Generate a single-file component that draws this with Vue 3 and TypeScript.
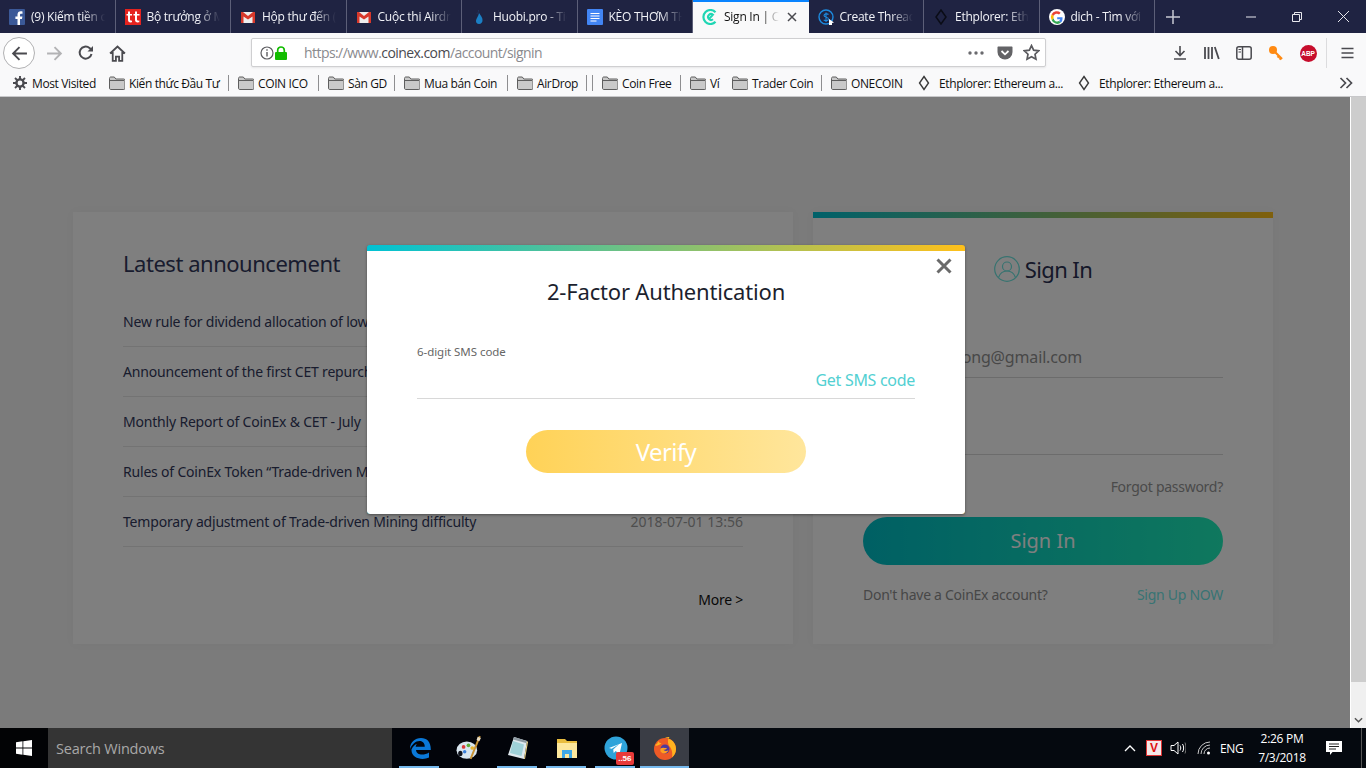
<script setup lang="ts">
interface Tab { title: string; icon: string; active?: boolean }
const tabs: Tab[] = [
  { title: '(9) Kiếm tiền cùng', icon: 'fb' },
  { title: 'Bộ trưởng ở Mỹ', icon: 'tt' },
  { title: 'Hộp thư đến (1)', icon: 'gm' },
  { title: 'Cuộc thi Airdrop', icon: 'gm' },
  { title: 'Huobi.pro - Tiền', icon: 'hb' },
  { title: 'KÈO THƠM THÁNG', icon: 'doc' },
  { title: 'Sign In | CoinEx', icon: 'cx', active: true },
  { title: 'Create Thread', icon: 'ct' },
  { title: 'Ethplorer: Ethereum', icon: 'eth' },
  { title: 'dich - Tìm với Google', icon: 'g' }
]
interface Mark { label: string; kind: string; w: number; sep?: number }
const marks: Mark[] = [
  { label: 'Most Visited', kind: 'gear', w: 96, sep: 0 },
  { label: 'Kiến thức Đầu Tư', kind: 'folder', w: 119, sep: 1 },
  { label: 'COIN ICO', kind: 'folder', w: 80, sep: 1 },
  { label: 'Sàn GD', kind: 'folder', w: 66, sep: 1 },
  { label: 'Mua bán Coin', kind: 'folder', w: 103, sep: 1 },
  { label: 'AirDrop', kind: 'folder', w: 69, sep: 2 },
  { label: 'Coin Free', kind: 'folder', w: 78, sep: 1 },
  { label: 'Ví', kind: 'folder', w: 42, sep: 0 },
  { label: 'Trader Coin', kind: 'folder', w: 89, sep: 1 },
  { label: 'ONECOIN', kind: 'folder', w: 87, sep: 0 },
  { label: 'Ethplorer: Ethereum a...', kind: 'eth', w: 160, sep: 0 },
  { label: 'Ethplorer: Ethereum a...', kind: 'eth', w: 160, sep: 0 }
]
const news = [
  { title: 'New rule for dividend allocation of low', date: '' },
  { title: 'Announcement of the first CET repurchase', date: '' },
  { title: 'Monthly Report of CoinEx & CET - July', date: '' },
  { title: 'Rules of CoinEx Token “Trade-driven Mining”', date: '' },
  { title: 'Temporary adjustment of Trade-driven Mining difficulty', date: '2018-07-01 13:56' }
]
const taskApps = ['edge', 'paint', 'note', 'files', 'tg', 'ff']
const runningApps = ['edge', 'note', 'files', 'tg', 'ff']
</script>

<template>
  <div class="screen">
    <div class="tabstrip">
      <div v-for="t in tabs" :key="t.title" class="tab" :class="{ active: t.active }">
        <svg class="fav" viewBox="0 0 16 16">
          <template v-if="t.icon === 'fb'">
            <rect width="16" height="16" rx="1" fill="#3b5998" />
            <path d="M11 16v-6h2l.4-2.6H11V6c0-.8.3-1.3 1.4-1.3h1.1V2.4C13.200 2.300 12.500 2.300 11.800 2.300 9.800 2.300 8.500 3.500 8.500 5.600v1.800H6.400V10h2.100v6z" fill="#fff" />
          </template>
          <template v-else-if="t.icon === 'tt'">
            <rect width="16" height="16" fill="#e5231f" />
            <path d="M3 2.500h2v2.500h2v1.600H5v4c0 .9.600 1.200 2 1v1.700c-2.500.5-4-.2-4-2.500V6.600H1.500V5H3zM10 2.500h2v2.500h2.500v1.600H12v4c0 .9.600 1.200 2.300 1v1.700c-2.800.5-4.300-.2-4.300-2.500V6.600H8.500V5H10z" fill="#fff" />
          </template>
          <template v-else-if="t.icon === 'gm'">
            <rect x="1" y="3" width="14" height="11" fill="#eeeeee" />
            <path d="M1 3h2l5 4 5-4h2v11h-2.500V7.500L8 10.500 3.500 7.500V14H1z" fill="#d8382b" />
          </template>
          <template v-else-if="t.icon === 'hb'">
            <path d="M8 4c2 3 3.500 4.500 3.500 7A3.500 3.500 0 0 1 8 15c-2 0-3.200-1.500-3-3.500C5.200 9.500 7.500 7 8 4z" fill="#1b7fc4" />
            <path d="M7.500 1C8 3 6.500 4 5.800 5" stroke="#22345e" fill="none" />
          </template>
          <template v-else-if="t.icon === 'doc'">
            <rect width="16" height="16" rx="1" fill="#4285f4" />
            <path d="M3.500 4.500h9M3.500 7h9M3.500 9.500h9M3.500 12h6" stroke="#fff" stroke-width="1.100" />
          </template>
          <template v-else-if="t.icon === 'cx'">
            <path d="M13.500 12.800A7 7 0 1 1 13.500 3.200" fill="none" stroke="#1fd6b4" stroke-width="2.200" />
            <path d="M11 10.300A3 3 0 1 1 11 5.700L7 10" fill="none" stroke="#1fd6b4" stroke-width="2" />
          </template>
          <template v-else-if="t.icon === 'ct'">
            <circle cx="8" cy="8" r="7" fill="none" stroke="#1d8be0" stroke-width="1.400" />
            <path d="M10.500 5.500C9.500 4.500 6 4.500 6 6.500S10.500 8 10.500 10 7 12 5.700 10.800M8 3.500v9.500" fill="none" stroke="#1d8be0" stroke-width="1.100" />
            <path d="M11 10l5 3.500-2 .5v2h-3z" fill="#fff" />
          </template>
          <template v-else-if="t.icon === 'eth'">
            <path d="M8 1l5 7-5 7-5-7z" fill="none" stroke="#0a0c16" stroke-width="1.500" />
          </template>
          <template v-else>
            <circle cx="8" cy="8" r="8" fill="#fff" />
            <path d="M13.500 8.200H8.200v2h3a3.300 3.300 0 0 1-1.300 1.900l2 1.500c1.200-1.100 1.800-2.900 1.600-5.400z" fill="#4285f4" />
            <path d="M4.700 9.300a3.500 3.500 0 0 0 5.200 2.800l2 1.500A6 6 0 0 1 2.600 10.900z" fill="#34a853" />
            <path d="M4.700 6.800a3.600 3.600 0 0 0 0 2.500l-2.100 1.600a6 6 0 0 1 0-5.700z" fill="#fbbc05" />
            <path d="M2.600 5.200a6 6 0 0 1 9.100-1.500L10 5.400a3.500 3.500 0 0 0-5.300 1.400z" fill="#ea4335" />
          </template>
        </svg>
        <span class="tab-title">{{ t.title }}</span>
        <svg v-if="t.active" class="tab-close" viewBox="0 0 10 10"><path d="M1 1l8 8M9 1l-8 8" stroke="#4a4a4f" stroke-width="1.500" /></svg>
      </div>
      <div class="newtab">
        <svg viewBox="0 0 14 14" width="14" height="14"><path d="M7 0v14M0 7h14" stroke="#c8c9d2" stroke-width="1.500" /></svg>
      </div>
      <div class="winctl">
        <span class="wc"><svg viewBox="0 0 10 10" width="10" height="10"><path d="M0 5h10" stroke="#e8e8ee" /></svg></span>
        <span class="wc"><svg viewBox="0 0 10 10" width="10" height="10"><path d="M.5 2.500h7v7h-7zM2.500 2.500v-2h7v7h-2" fill="none" stroke="#e8e8ee" /></svg></span>
        <span class="wc"><svg viewBox="0 0 10 10" width="11" height="11"><path d="M0 0l10 10M10 0L0 10" stroke="#e8e8ee" stroke-width=".9" /></svg></span>
      </div>
    </div>

    <div class="navbar">
      <div class="nav-left">
        <span class="back">
          <svg viewBox="0 0 16 16" width="17" height="17"><path d="M15 8H2M8 2L2 8l6 6" fill="none" stroke="#4a4a4f" stroke-width="1.800" /></svg>
        </span>
        <svg class="nav-ico fwd" viewBox="0 0 16 16" width="17" height="17"><path d="M1 8h13M8 2l6 6-6 6" fill="none" stroke="#b3b3b5" stroke-width="1.800" /></svg>
        <svg class="nav-ico" viewBox="0 0 16 16" width="16" height="16"><path d="M13.500 9A6 6 0 1 1 11.500 3L14 5" fill="none" stroke="#4a4a4f" stroke-width="2" /><path d="M15 1v5.500H9.500z" fill="#4a4a4f" /></svg>
        <svg class="nav-ico home" viewBox="0 0 16 16" width="17" height="17"><path d="M1 8l7-6.500L15 8M3.500 6.500V15h3v-4h3v4h3V6.500" fill="none" stroke="#4a4a4f" stroke-width="1.700" /></svg>
      </div>
      <div class="urlbar">
        <svg viewBox="0 0 14 14" width="14" height="14"><circle cx="7" cy="7" r="6" fill="none" stroke="#5c5c60" stroke-width="1.200" /><path d="M7 6v4.500M7 3.300v1.500" stroke="#5c5c60" stroke-width="1.400" /></svg>
        <svg class="lock" viewBox="0 0 14 14" width="14" height="14"><rect x="1" y="6" width="12" height="8" rx="1" fill="#12bc00" /><path d="M3.700 6.500V4.300a3.300 3.300 0 0 1 6.600 0v2.200" fill="none" stroke="#12bc00" stroke-width="1.700" /></svg>
        <span class="url">https://www.<b>coinex.com</b>/account/signin</span>
        <span class="url-end">
          <svg class="dots" viewBox="0 0 16 4" width="16" height="4"><circle cx="2" cy="2" r="1.700" fill="#6a6a6e" /><circle cx="8" cy="2" r="1.700" fill="#6a6a6e" /><circle cx="14" cy="2" r="1.700" fill="#6a6a6e" /></svg>
          <svg viewBox="0 0 16 16" width="16" height="16"><path d="M1.500 1.500h13c.6 0 1 .4 1 1V7a7.500 7.500 0 0 1-15 0V2.500c0-.6.4-1 1-1z" fill="#636366" /><path d="M4.500 6L8 9.300 11.500 6" fill="none" stroke="#fff" stroke-width="1.800" /></svg>
          <svg viewBox="0 0 16 16" width="17" height="17"><path d="M8 1.500l2 4.300 4.700.6-3.400 3.200.9 4.700L8 12l-4.200 2.300.9-4.700L1.300 6.400 6 5.800z" fill="none" stroke="#5a5a5e" stroke-width="1.600" /></svg>
        </span>
      </div>
      <div class="nav-right">
        <span class="nr"><svg viewBox="0 0 14 14" width="14" height="14"><path d="M7 0v9M2.500 5L7 9.500 11.500 5M1 13h12" fill="none" stroke="#4a4a4f" stroke-width="1.600" /></svg></span>
        <span class="nr"><svg viewBox="0 0 16 14" width="16" height="14"><path d="M1 1v12M4.500 1v12M8 1v12M10.800 1l4 12" fill="none" stroke="#4a4a4f" stroke-width="1.800" /></svg></span>
        <span class="nr"><svg viewBox="0 0 16 14" width="16" height="14"><rect x=".8" y=".8" width="14.400" height="12.400" rx="2" fill="none" stroke="#4a4a4f" stroke-width="1.500" /><path d="M6.500 1v12" stroke="#4a4a4f" stroke-width="1.500" /><path d="M2.500 3.500h2.500M2.500 6h2.500" stroke="#4a4a4f" /></svg></span>
        <span class="nr"><svg viewBox="0 0 16 16" width="16" height="16"><circle cx="5" cy="5" r="4" fill="#ff8a12" /><path d="M7.500 7.500L14 14M11 11l-1.500 1.500M13 13l-1.500 1.500" stroke="#ff8a12" stroke-width="2.200" fill="none" /></svg></span>
        <span class="nr"><span class="abp">ABP</span></span>
        <span class="nr-sep"></span>
        <span class="nr"><svg viewBox="0 0 12 12" width="13" height="12"><path d="M0 1.500h12M0 6h12M0 10.500h12" stroke="#4a4a4f" stroke-width="1.500" /></svg></span>
      </div>
    </div>

    <div class="bookmarks">
      <div class="marks">
        <template v-for="(m, i) in marks" :key="i">
          <div class="mark" :style="{ width: m.w + 'px' }">
            <svg v-if="m.kind === 'gear'" class="mk-gear" viewBox="0 0 14 14" width="14" height="14"><circle cx="7" cy="7" r="3.600" fill="none" stroke="#4a4a4f" stroke-width="2.400" /><path d="M7 0v3M7 11v3M0 7h3M11 7h3M2 2l2.200 2.200M9.800 9.800L12 12M12 2L9.800 4.200M4.200 9.800L2 12" stroke="#4a4a4f" stroke-width="1.900" /></svg>
            <svg v-else-if="m.kind === 'folder'" class="mk-folder" viewBox="0 0 16 14" width="16" height="14"><path d="M.5 2.500c0-.8.5-1.500 1.200-1.500h3.600l1.500 2h8c.6 0 1.200.5 1.200 1.200v8.100c0 .6-.5 1.200-1.200 1.200H1.700c-.7 0-1.200-.6-1.200-1.200z" fill="#c9c9c9" stroke="#5e5e5e" /><path d="M1 4.500h14" stroke="#5e5e5e" /></svg>
            <svg v-else class="mk-eth" viewBox="0 0 12 16" width="12" height="16"><path d="M6 1.500l4.500 6.500L6 14.500 1.500 8z" fill="none" stroke="#3a3a3a" stroke-width="1.400" /></svg>
            <span class="mk-label">{{ m.label }}</span>
          </div>
          <i v-for="n in m.sep" :key="n" class="mk-sep"></i>
        </template>
      </div>
      <svg class="more-marks" viewBox="0 0 14 12" width="14" height="12"><path d="M1.500 1l5 5-5 5M7.500 1l5 5-5 5" fill="none" stroke="#4a4a4f" stroke-width="1.700" /></svg>
    </div>

    <div class="viewport">
      <div class="page">
        <div class="cards">
          <section class="card news">
            <h2>Latest announcement</h2>
            <ul>
              <li v-for="n in news" :key="n.title"><span>{{ n.title }}</span><time>{{ n.date }}</time></li>
            </ul>
            <a class="more">More &gt;</a>
          </section>
          <section class="card login">
            <div class="rainbow"></div>
            <div class="login-head">
              <svg viewBox="0 0 26 26" width="26" height="26"><circle cx="13" cy="13" r="12.300" fill="none" stroke="#6fe6e0" stroke-width="1.200" /><circle cx="13" cy="10.500" r="4.500" fill="none" stroke="#6fe6e0" stroke-width="1.200" /><path d="M4.500 21.500c1.500-4.500 5-6.500 8.500-6.500s7 2 8.500 6.500" fill="none" stroke="#6fe6e0" stroke-width="1.200" /></svg>
              <span>Sign In</span>
            </div>
            <div class="field email">nguyenhuythong@gmail.com</div>
            <div class="field pass"></div>
            <div class="forgot">Forgot password?</div>
            <div class="signin-btn">Sign In</div>
            <div class="signup"><span>Don't have a CoinEx account?</span><a>Sign Up NOW</a></div>
          </section>
        </div>
        <div class="overlay">
          <div class="modal">
            <svg class="modal-x" viewBox="0 0 16 16" width="16" height="16"><path d="M1.500 1.500l13 13M14.500 1.500l-13 13" stroke="#6a6a6a" stroke-width="3" /></svg>
            <h3>2-Factor Authentication</h3>
            <label>6-digit SMS code</label>
            <div class="sms-row"><a>Get SMS code</a></div>
            <div class="verify">Verify</div>
          </div>
        </div>
      </div>
      <div class="scrollbar">
        <div class="thumb"></div>
        <svg viewBox="0 0 10 6" width="9" height="6"><path d="M1 1l4 4 4-4" fill="none" stroke="#555" stroke-width="1.600" /></svg>
      </div>
    </div>

    <div class="taskbar">
      <div class="start">
        <svg viewBox="0 0 16 16" width="16" height="16"><path d="M0 2.200l6.500-.9v6.300H0zM7.300 1.200L16 0v7.600H7.300zM0 8.400h6.500v6.300L0 13.800zM7.300 8.400H16V16l-8.700-1.200z" fill="#fff" /></svg>
      </div>
      <div class="search">Search Windows</div>
      <div class="apps">
        <div v-for="a in taskApps" :key="a" class="app" :class="{ on: a === 'ff', run: runningApps.includes(a) }">
          <svg v-if="a === 'edge'" viewBox="0 0 24 24" width="24" height="24"><path d="M2 13C2 6 7 2 13 2c6 0 10 4 9.800 12H8c.3 5 7.500 6 13 2.500v5C15 24.500 3 23 3.500 13.500 5 10 7 8.500 9 8c-1 1-1.300 2-1.300 2.800h9C17 7 14 5 11.500 5 7.500 5 4 8.500 2 13z" fill="#0a78d7" /></svg>
          <svg v-else-if="a === 'paint'" viewBox="0 0 24 24" width="26" height="26"><ellipse cx="10" cy="14" rx="9.500" ry="8" fill="#d9e6ef" /><ellipse cx="4" cy="17" rx="2" ry="2.500" fill="#10131c" /><circle cx="7" cy="11" r="1.700" fill="#d93a3a" /><circle cx="11.500" cy="9.500" r="1.700" fill="#5fae3a" /><circle cx="15" cy="12" r="1.700" fill="#e8b52e" /><circle cx="8" cy="15.500" r="1.600" fill="#3a7fd9" /><path d="M22 1L13.500 22" stroke="#c99335" stroke-width="1.800" /><path d="M20 1.500l3 1.200-1.500 3-2.500-1z" fill="#e8dcc2" /></svg>
          <svg v-else-if="a === 'note'" viewBox="0 0 24 24" width="24" height="24"><path d="M8 1l13 4-3 18L2 19z" fill="#dfe9ee" /><path d="M8 1l13 4-1 2L7 3.500z" fill="#8e9ba3" /><path d="M7 5l11 3.500L15.500 20 4 17z" fill="#9fd1d8" /><path d="M18 23l3-18 1 1-3 17z" fill="#f2d98c" /></svg>
          <svg v-else-if="a === 'files'" viewBox="0 0 24 24" width="24" height="24"><path d="M2 3h8l2 2h10v4H2z" fill="#e9bd3f" /><path d="M2 7h20v15H2z" fill="#fde79c" /><path d="M7 14h10v8h-3v-4h-4v4H7z" fill="#3fa8e6" /></svg>
          <span v-else-if="a === 'tg'" class="tg">
            <svg viewBox="0 0 24 24" width="24" height="24"><circle cx="12" cy="12" r="11.500" fill="#2fa3da" /><path d="M5 12l13-5-2.500 11-3.800-3-2 2-.5-3.500 6-5.500-7.500 4.700z" fill="#fff" /></svg>
            <em>..56</em>
          </span>
          <svg v-else viewBox="0 0 24 24" width="24" height="24"><circle cx="12" cy="13" r="11" fill="#ee5a26" /><path d="M12 2c6.500 0 11 5 11 11 0 3.500-1.500 6.500-4 8.500 1-5-.5-9.500-3-11.500C15 7 14 4 16.500 1 15 1 13.200 1.200 12 2z" fill="#ffb21f" /><path d="M2 9c2-1 3-2 3-4 1 1.500 2 2 3.500 2.500C6 9 3.500 11 2 9z" fill="#ffb21f" /><circle cx="12" cy="13" r="4.500" fill="#4d3a9e" /><path d="M7.500 12.500c2-1.500 4-.5 6.500-.5-1 1.500-2 1.800-3.500 1.800 1.500 1.700 3.500 1.500 5 .3-1 3.500-5 4.500-7 2.500C7.300 15.500 7 14 7.500 12.500z" fill="#ff9f1f" /></svg>
        </div>
      </div>
      <div class="tray">
        <svg class="tr-chev" viewBox="0 0 12 7" width="12" height="7"><path d="M1 6l5-5 5 5" fill="none" stroke="#fff" stroke-width="1.300" /></svg>
        <span class="tr-v">V</span>
        <svg class="tr-spk" viewBox="0 0 16 14" width="16" height="14"><path d="M1 4.500h3L8 1v12L4 9.500H1z" fill="none" stroke="#fff" /><path d="M10 4.500c1 1.500 1 3.500 0 5M12.500 3c1.500 2 1.500 6 0 8" fill="none" stroke="#fff" /><path d="M15 1.500c1.300 3 1.300 8 0 11" fill="none" stroke="#777" /></svg>
        <svg class="tr-wifi" viewBox="0 0 14 14" width="14" height="14"><path d="M1 13A12 12 0 0 1 13 1M4 13a9 9 0 0 1 9-9M7 13a6 6 0 0 1 6-6" fill="none" stroke="#c9c9c9" /><circle cx="11.500" cy="12" r="1.500" fill="#fff" /></svg>
        <span class="tr-lang">ENG</span>
        <div class="clock"><span>2:26 PM</span><span>7/3/2018</span></div>
        <svg class="tr-note" viewBox="0 0 16 14" width="16" height="14"><path d="M0 0h16v11H6.500L4 14v-3H0z" fill="#fff" /><path d="M3 3h10M3 5.500h10M3 8h7" stroke="#222" /></svg>
        <i class="show-desktop"></i>
      </div>
    </div>
  </div>
</template>

<style>
html, body { margin: 0; padding: 0; overflow: hidden; }
</style>

<style scoped>
.screen { width: 1366px; height: 768px; display: flex; flex-direction: column; font-family: "Open Sans", "Noto Sans", sans-serif; overflow: hidden; background: #fff; }
svg { display: block; flex: none; }

.tabstrip { height: 33px; flex: none; display: flex; background: #1f2342; }
.tab { width: 115.500px; flex: none; box-sizing: border-box; height: 33px; display: flex; align-items: center; padding: 0 10px 0 9px; border-right: 1px solid #5c5f78; color: #f2f3f8; font-size: 12px; letter-spacing: -.25px; gap: 6px; }
.fav { width: 16px; height: 16px; }
.tab-title { flex: 1; min-width: 0; overflow: hidden; white-space: nowrap; -webkit-mask-image: linear-gradient(to right, #000 70%, transparent 100%); mask-image: linear-gradient(to right, #000 70%, transparent 100%); }
.tab.active { background: #f9f9fa; color: #111; border-right: 0; border-top: 2px solid #0a84ff; padding-bottom: 2px; padding-right: 12px; }
.tab-close { width: 10px; height: 10px; margin-left: 2px; }
.newtab { width: 35px; display: flex; align-items: center; justify-content: center; }
.winctl { flex: 1; display: flex; justify-content: flex-end; align-items: center; }
.wc { width: 46px; display: flex; justify-content: center; }

.navbar { height: 37px; flex: none; background: #f9f9fa; display: flex; align-items: center; }
.nav-left { width: 251px; flex: none; display: flex; align-items: center; padding-left: 3px; box-sizing: border-box; }
.back { width: 32px; height: 32px; box-sizing: border-box; border: 1px solid #b1b1b3; border-radius: 50%; background: #fff; display: flex; align-items: center; justify-content: center; margin-top: 3px; }
.nav-ico { margin-top: 3px; }
.fwd { margin-left: 11px; }
.nav-ico.fwd + .nav-ico { margin-left: 15px; }
.nav-ico.home { margin-left: 15px; }
.urlbar { width: 795px; height: 29px; flex: none; box-sizing: border-box; margin-top: 2px; border: 1px solid #cfcfd1; border-radius: 2px; background: #fff; display: flex; align-items: center; padding: 0 5px 0 8px; box-shadow: 0 1px 2px rgba(0,0,0,.08); }
.url { margin-left: 16px; font-size: 14px; color: #8a8a8e; white-space: nowrap; letter-spacing: -.56px; }
.url b { font-weight: 400; color: #4a4a4f; }
.url-end { margin-left: auto; display: flex; align-items: center; gap: 10px; }
.dots { margin-right: 3px; }
.nav-right { flex: 1; display: flex; align-items: center; justify-content: flex-start; padding-left: 118px; margin-top: 3px; }
.nr { width: 32px; display: flex; justify-content: center; }
.nr-sep { width: 1px; height: 30px; background: #dcdcde; margin: 0 4px 0 2px; }
.abp { width: 17px; height: 17px; border-radius: 50%; background: #c70d2c; color: #fff; font: 700 6.500px/17px "Liberation Sans", sans-serif; text-align: center; letter-spacing: -.1px; }

.bookmarks { height: 27px; flex: none; box-sizing: border-box; background: #f9f9fa; border-bottom: 1px solid #c8c8ca; display: flex; align-items: center; padding-left: 13px; font-size: 12px; letter-spacing: -.38px; color: #111; }
.marks { display: flex; align-items: center; flex: 1; }
.mark { display: flex; align-items: center; flex: none; white-space: nowrap; gap: 4px; }
.mk-gear { margin-right: 1px; }
.mk-eth { margin-right: 5px; }
.mk-sep { width: 1px; height: 16px; background: #8e8e90; flex: none; margin-right: 9px; }
.mk-sep + .mk-sep { margin-left: -4px; }
.more-marks { margin-right: 13px; }

.viewport { flex: 1; display: flex; min-height: 0; }
.page { flex: 1; position: relative; background: #f6f6f6; }
.cards { display: flex; gap: 20px; padding: 115px 0 0 73px; color: #32395c; }
.card { background: #fff; height: 432px; box-sizing: border-box; box-shadow: 0 0 10px rgba(0,0,0,.03); }
.news { width: 720px; padding: 35px 50px 0; font-family: "Noto Sans", sans-serif; }
.news h2 { margin: 0 0 18px; font-size: 22px; font-weight: 400; line-height: 32px; letter-spacing: -.47px; }
.news ul { margin: 0; padding: 0; list-style: none; }
.news li { height: 50px; box-sizing: border-box; border-bottom: 1px solid #e6e6e6; display: flex; justify-content: space-between; align-items: center; font-size: 14px; letter-spacing: -.19px; white-space: nowrap; }
.news time { color: #9c9c9c; letter-spacing: 0; }
.more { display: block; text-align: right; margin-top: 43px; font-size: 14px; color: #111; line-height: 20px; letter-spacing: -.25px; }
.login { width: 460px; padding: 0 50px; font-family: "Noto Sans", sans-serif; display: flex; flex-direction: column; }
.rainbow { height: 6px; margin: 0 -50px; background: linear-gradient(to right, #00c2d4, #ffc01a); }
.login-head { display: flex; align-items: center; justify-content: center; gap: 5px; margin-top: 38px; height: 26px; font-size: 22px; letter-spacing: -.6px; color: #2a3052; }
.field { height: 77px; box-sizing: border-box; border-bottom: 1px solid #d8d8d8; font-size: 16px; color: #909090; display: flex; align-items: flex-end; padding-bottom: 9px; letter-spacing: -.15px; white-space: nowrap; }
.email { height: 96px; }
.forgot { text-align: right; font-size: 14px; color: #949494; margin-top: 22px; line-height: 20px; letter-spacing: -.27px; }
.signin-btn { height: 48px; margin-top: 20px; border-radius: 24px; background: linear-gradient(to right, #00c0c8, #1ef0bc); text-align: center; color: #fff; font-size: 20px; line-height: 48px; }
.signup { display: flex; justify-content: space-between; margin-top: 20px; font-size: 14px; color: #8e8e8e; line-height: 20px; letter-spacing: -.28px; }
.signup a { color: #70e8e8; }

.overlay { position: absolute; inset: 0; background: rgba(0,0,0,.5); }
.modal { position: absolute; left: 367px; top: 148px; width: 598px; height: 269px; box-sizing: border-box; border-radius: 3px; border-top: 6px solid transparent; padding: 0 50px; font-family: "Noto Sans", sans-serif; box-shadow: 0 1px 3px rgba(0,0,0,.4); background-image: linear-gradient(#fff, #fff), linear-gradient(to right, #00c2d4, #ffc01a); background-origin: border-box; background-clip: padding-box, border-box; }
.modal-x { position: absolute; right: 13px; top: 7px; }
.modal h3 { margin: 24px 0 0; text-align: center; font-weight: 400; font-size: 22px; line-height: 32px; color: #1c1f2e; letter-spacing: -.18px; }
.modal label { display: block; margin-top: 37px; font-size: 11.500px; line-height: 16px; color: #666; letter-spacing: -.05px; }
.sms-row { height: 39px; box-sizing: border-box; border-bottom: 1px solid #d8d8d8; display: flex; justify-content: flex-end; align-items: center; padding-top: 2px; }
.sms-row a { font-size: 16px; color: #52d0d2; letter-spacing: -.3px; }
.verify { width: 280px; height: 43px; margin: 31px auto 0; border-radius: 22px; background: linear-gradient(to right, #ffd257, #ffe69c); color: #fff; text-align: center; font-size: 24px; line-height: 43px; letter-spacing: -.6px; }

.scrollbar { width: 16px; flex: none; box-sizing: border-box; border-left: 1px solid #fff; background: #f0f0f0; position: relative; display: flex; justify-content: center; align-items: flex-end; padding-bottom: 5px; }
.thumb { position: absolute; left: 0; right: 0; top: 0; height: 585px; background: #cdcdcd; }

.taskbar { height: 40px; flex: none; background: #05090f; display: flex; align-items: stretch; color: #fff; }
.start { width: 48px; display: flex; align-items: center; justify-content: center; background: #020305; }
.search { width: 344px; background: #343434; color: #a8a8a8; font-size: 14.500px; letter-spacing: -.2px; display: flex; align-items: center; padding-left: 8px; box-sizing: border-box; }
.apps { display: flex; padding-left: 3px; background: #02040a; }
.app { width: 49px; display: flex; align-items: center; justify-content: center; position: relative; }
.app.run::after { content: ""; position: absolute; left: 4px; right: 5px; bottom: 0; height: 2px; background: #76b9ed; }
.app.on::after { left: 0; right: 0; }
.app.on { background: #3a3d45; }
.tg { position: relative; display: block; }
.tg em { position: absolute; right: -6px; bottom: -5px; background: #e83a3a; color: #fff; font: 700 8px/13px "Liberation Sans", sans-serif; padding: 0 2px; border-radius: 2px; }
.tray { flex: 1; display: flex; align-items: center; padding-left: 435px; }
.tr-chev { margin-right: 10px; }
.tr-v { width: 16px; height: 16px; background: #f4e8e8; border: 1px solid #d33; box-sizing: border-box; color: #d11; font: 700 12px/14px "Liberation Sans", sans-serif; text-align: center; margin-right: 8px; }
.tr-spk { margin-right: 11px; }
.tr-wifi { margin-right: 9px; }
.tr-lang { font-size: 12px; letter-spacing: -.4px; width: 24px; margin-right: 3px; }
.clock { width: 70px; text-align: center; display: flex; flex-direction: column; font-size: 12px; line-height: 19px; letter-spacing: -.3px; margin-right: 9px; }
.show-desktop { margin-left: auto; margin-right: 4px; width: 1px; height: 40px; background: #555; }
</style>
